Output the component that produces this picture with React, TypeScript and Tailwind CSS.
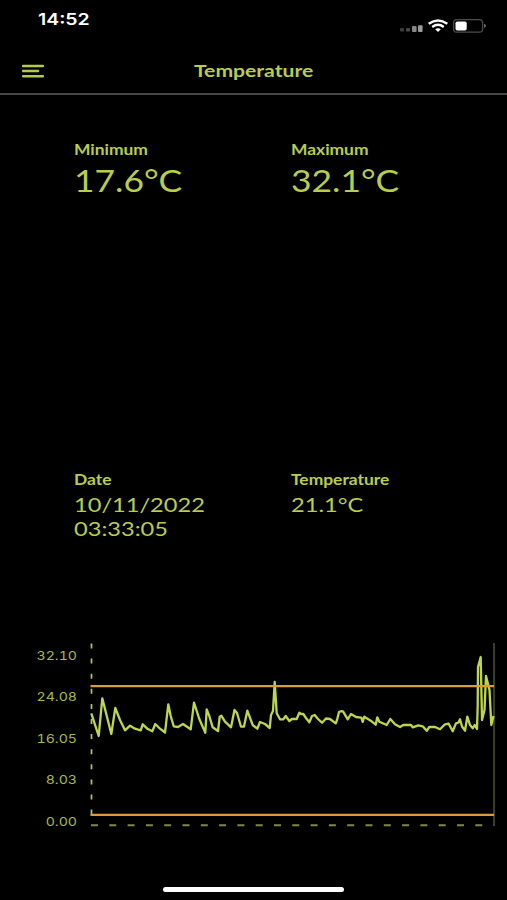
import type { ReactNode } from 'react'

const AXIS_LABELS = ['32.10', '24.08', '16.05', '8.03', '0.00']

// [x, y] in chart pixels, origin at the top left of the svg
const READINGS: [number, number][] = [
  [6.3, 73.3], [13.7, 96], [17.3, 58.3], [26.3, 94], [30.3, 68], [35, 80], [40, 90.3],
  [45, 85.7], [50, 88.7], [55.7, 90.3], [57.7, 84.3], [62.3, 88.7], [67.3, 91.3], [70.3, 84],
  [75, 88.7], [80, 92.5], [83.3, 64.3], [85.7, 76], [88.7, 86.3], [93, 87], [98, 84],
  [105.7, 89.3], [109, 62.7], [114.3, 79], [120.3, 92.7], [121.7, 69.3], [124.3, 76],
  [127.7, 87.3], [133, 91], [134.7, 77], [136.3, 75.7], [140, 81.7], [146, 87.3], [149.5, 70],
  [152, 73], [156, 86.7], [159, 86.5], [162.3, 70.7], [167.7, 85], [172.3, 88.7], [175, 82],
  [180, 84], [184.7, 88], [186, 75], [188, 71], [189.7, 42], [191.7, 73.3], [195, 79.3],
  [198.3, 79.3], [200.7, 76], [204.3, 81], [207, 79], [211.7, 79], [214.3, 72.7],
  [216, 74], [218.3, 74], [221, 78], [224.3, 82.3], [227, 76], [229.7, 75], [233, 79],
  [237, 82.7], [241, 78.5], [245, 79], [250.7, 83.3], [252, 80], [254, 72], [256, 71.2],
  [258, 71.3], [262.7, 79.3], [266, 74], [271, 77], [276.3, 77.7], [277.7, 82], [279.3, 76.7],
  [285.7, 80.7], [290.7, 84.7], [292.3, 77.3], [294.3, 81.7], [301.7, 85], [305.3, 79],
  [310, 84.3], [315, 87], [318.3, 85], [326, 85], [327.7, 87.3], [333.3, 85.3], [337.7, 86.3],
  [341.7, 90.8], [344.3, 87], [350, 87], [355, 89.3], [360, 84.3], [363.7, 83.7],
  [367.7, 91.3], [371, 83.3], [373.5, 82.5], [375, 79.3], [377, 86.5], [380, 90.7],
  [382.3, 76.7], [385, 85], [387.7, 88.3], [389.7, 85], [392, 89], [392.7, 66], [393, 27],
  [395.7, 17], [397, 80], [399.5, 70], [401, 36], [404.5, 50], [406.3, 85], [408.5, 76],
]

function Stat({ label, className, children }: { label: string; className?: string; children: ReactNode }) {
  return (
    <div className={`flex-none whitespace-nowrap ${className ?? ''}`}>
      <p className="origin-left scale-x-[1.2] text-[14.5px] leading-[18px] font-bold">{label}</p>
      {children}
    </div>
  )
}

function StatusBar() {
  return (
    <div className="flex h-[49px] justify-between pr-[20px] pl-[38px] text-white">
      <span className="mt-[9px] origin-left scale-x-[1.2] font-[Inter,sans-serif] text-[16.2px] leading-[20px] font-semibold">
        14:52
      </span>
      <svg className="mt-[16px]" width="88" height="20" viewBox="0 0 88 20" fill="none">
        {/* Signal */}
        <rect x="1" y="12" width="4" height="3.6" rx="1" fill="#3c3c3c" />
        <rect x="7" y="12" width="4" height="3.6" rx="1" fill="#484848" />
        <rect x="13" y="10" width="4.6" height="6" rx="1" fill="#858585" />
        <rect x="19" y="9.3" width="4.6" height="6.7" rx="1" fill="#989898" />
        {/* Wifi */}
        <path d="M29.7 7.8Q39 1 48.3 7.8" stroke="white" strokeWidth="2.4" />
        <path d="M33.2 11Q39 6.6 44.8 11" stroke="white" strokeWidth="2.3" />
        <path d="M36.2 13.2Q39 11.2 41.8 13.2L39 15.9Z" fill="white" />
        {/* Battery */}
        <rect x="54.6" y="3.7" width="29" height="12.4" rx="3.2" stroke="#4c4c4c" strokeWidth="1.3" />
        <rect x="56.5" y="5.5" width="11.2" height="9" rx="1.8" fill="white" />
        <path d="M85 7.8Q87 8.5 87 9.8T85 12Z" fill="#666" />
      </svg>
    </div>
  )
}

function Chart() {
  return (
    <div className="flex">
      <div className="flex w-[77px] flex-col gap-[21.4px] pt-[6px] text-right font-[Inter,sans-serif] text-[12.3px] leading-[20px] text-[#a5b943] tabular-nums">
        {AXIS_LABELS.map(label => (
          <span key={label} className="origin-right scale-x-[1.15]">{label}</span>
        ))}
      </div>
      <svg className="ml-[8px]" width="422" height="190" viewBox="0 0 422 190" fill="none">
        <path d="M6.5 3.5V175" stroke="#b2c94a" strokeWidth="1.7" strokeDasharray="5 10.1" />
        <path d="M6 185.3H409" stroke="#7d8b42" strokeWidth="1.9" strokeDasharray="7 11.3" />
        <path d="M409 3V186" stroke="#4c5527" strokeWidth="1.5" />
        <polyline
          points={READINGS.map(p => p.join(',')).join(' ')}
          stroke="#bdd64e"
          strokeWidth="2.3"
          strokeLinejoin="round"
        />
        <path d="M5.5 46.2H409M5.5 174.9H409" stroke="#dd9a3d" strokeWidth="2.2" />
      </svg>
    </div>
  )
}

export default function App() {
  return (
    <div className="flex h-[900px] w-[507px] flex-col overflow-hidden bg-black font-[Lato,sans-serif] text-[#b9cd4b]">
      <StatusBar />

      <header className="flex h-[46px] items-center border-b-2 border-[#484848] pl-[22px]">
        <svg width="22" height="14" viewBox="0 0 22 14" stroke="#b5c94e" strokeWidth="2.4" strokeLinecap="round">
          <path d="M1 2H21M1 7H16M1 12.2H21" />
        </svg>
        <h1 className="ml-[149.5px] origin-left scale-x-[1.2] text-[17.6px] leading-[22px] font-bold">Temperature</h1>
      </header>

      <section className="mt-[46px] flex h-[330px] pl-[74px]">
        <Stat label="Minimum" className="w-[217px]">
          <p className="mt-px origin-left scale-x-[1.18] text-[30px] leading-[40px]">17.6°C</p>
        </Stat>
        <Stat label="Maximum">
          <p className="mt-px origin-left scale-x-[1.18] text-[30px] leading-[40px]">32.1°C</p>
        </Stat>
      </section>

      <section className="flex h-[169px] pl-[74px]">
        <Stat label="Date" className="w-[217px]">
          <p className="mt-[3px] origin-left scale-x-[1.18] text-[20px] leading-[24px]">
            10/11/2022<br />03:33:05
          </p>
        </Stat>
        <Stat label="Temperature">
          <p className="mt-[3px] origin-left scale-x-[1.18] text-[20px] leading-[24px]">21.1°C</p>
        </Stat>
      </section>

      <Chart />

      <div className="mt-auto mb-[8px] ml-[163px] h-[5px] w-[181px] rounded-full bg-white" />
    </div>
  )
}
